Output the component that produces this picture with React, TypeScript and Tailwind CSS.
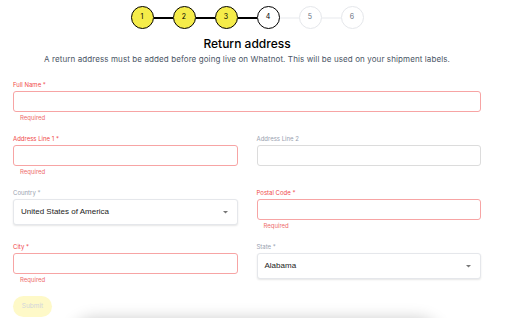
import React from 'react';

const steps = [1, 2, 3, 4, 5, 6];

function Stepper() {
  return (
    <div className="flex items-center justify-center pt-[6px]">
      {steps.map((n, i) => (
        <React.Fragment key={n}>
          {i > 0 && (
            <div className={`h-[2px] w-[19px] ${n <= 4 ? 'bg-black' : 'bg-gray-100'}`} />
          )}
          <div
            className={`flex h-[23px] w-[23px] items-center justify-center rounded-full text-[7px] ${
              n <= 3
                ? 'border border-black bg-[#f5ec4a] text-black'
                : n === 4
                ? 'border border-black bg-white text-black'
                : 'border border-gray-200 bg-white text-gray-500'
            }`}
          >
            {n}
          </div>
        </React.Fragment>
      ))}
    </div>
  );
}

function Chevron() {
  return (
    <svg width="5" height="3" viewBox="0 0 5 3" className="mr-[5px]">
      <path d="M0 0 L5 0 L2.5 2.5 Z" fill="#777" />
    </svg>
  );
}

type FieldProps = { label: string; required?: boolean; error?: boolean };

function TextField({ label, required, error }: FieldProps) {
  return (
    <div className="flex flex-col">
      <div className={`h-[8px] text-[6px] leading-[8px] ${error ? 'text-[#f04848]' : 'text-gray-400'}`}>
        {label}
        {required ? ' *' : ''}
      </div>
      <div
        className={`mt-[2px] h-[21px] rounded-[3px] border bg-white ${
          error ? 'border-[#f7a4a4]' : 'border-[#dcdcdc]'
        }`}
      />
      {error && <div className="mt-[2px] h-[8px] pl-[7px] text-[6px] leading-[8px] text-[#ee6b6b]">Required</div>}
    </div>
  );
}

function SelectField({ label, value }: { label: string; value: string }) {
  return (
    <div className="flex flex-col">
      <div className="h-[8px] text-[6px] leading-[8px] text-gray-400">{label} *</div>
      <div className="mt-[2px] flex h-[26px] items-center justify-between rounded-[3px] border border-gray-200 bg-white pl-[7px] pr-[4px] shadow-[0_1px_2px_rgba(0,0,0,0.1)]">
        <span className="text-[8px] font-normal text-[#222] [font-family:'Liberation_Sans',Arial,sans-serif]">{value}</span>
        <Chevron />
      </div>
    </div>
  );
}

export default function App() {
  return (
    <div className="relative h-[318px] w-[512px] overflow-hidden bg-white [font-family:Inter,'Noto_Sans',sans-serif]">
      <div className="pl-[13px] pr-[31px]">
        <Stepper />
        <div className="mt-[7px] text-center text-[12px] font-medium leading-[16px] text-black">Return address</div>
        <div className="mt-[2px] text-center text-[8px] leading-[10px] tracking-[0.1px] text-gray-600">
          A return address must be added before going live on Whatnot. This will be used on your shipment labels.
        </div>

        <div className="mt-[17px] flex flex-col gap-[13px]">
          <TextField label="Full Name" required error />
          <div className="grid grid-cols-2 items-start gap-x-[19px]">
            <TextField label="Address Line 1" required error />
            <TextField label="Address Line 2" />
          </div>
          <div className="grid grid-cols-2 items-start gap-x-[19px]">
            <SelectField label="Country" value="United States of America" />
            <TextField label="Postal Code" required error />
          </div>
          <div className="grid grid-cols-2 items-start gap-x-[19px]">
            <TextField label="City" required error />
            <SelectField label="State" value="Alabama" />
          </div>
        </div>

        <div className="mt-[12px] flex">
          <button className="h-[21px] w-[39px] rounded-full bg-[#fef9c8] text-[6.5px] text-gray-300">Submit</button>
        </div>
      </div>
      <div className="mx-[75px] mt-[6px] h-[40px] rounded-t-[20px] bg-white shadow-[0_0_16px_4px_rgba(0,0,0,0.22)]" />
    </div>
  );
}
